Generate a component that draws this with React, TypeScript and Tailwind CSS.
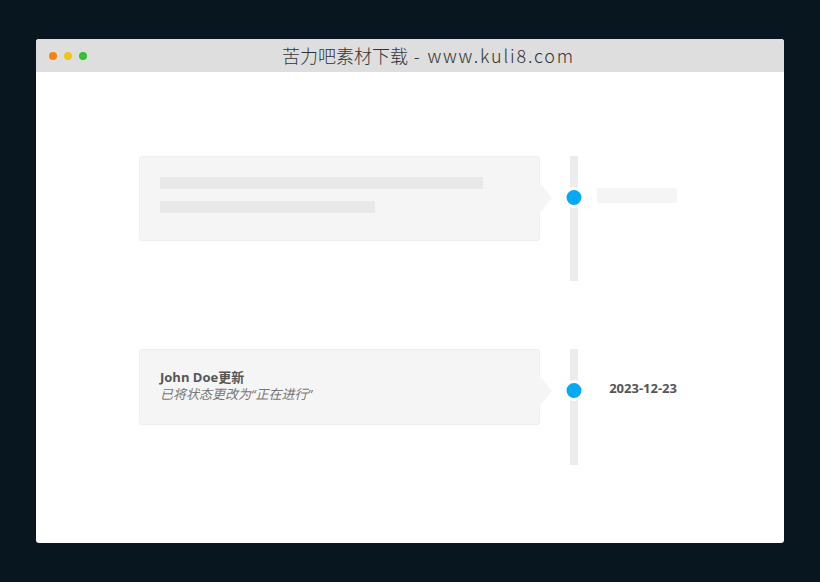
import React from 'react';

const font = { fontFamily: '"Open Sans", "Noto Sans CJK SC", sans-serif' };

function Arrow() {
  return (
    <div className="absolute left-full top-[25px] w-0 h-0 border-y-[16px] border-y-transparent border-l-[13px] border-l-[#f5f5f5]" />
  );
}

function Rail() {
  return (
    <div className="relative w-[8px] ml-[30px] bg-[#ececee]">
      <div className="absolute left-1/2 -translate-x-1/2 top-[31px] w-[21px] h-[21px] rounded-full bg-[#03a9f4] border-[3px] border-white" />
    </div>
  );
}

function LoadingItem() {
  return (
    <div className="flex">
      <div className="pb-[40px]">
        <div className="relative w-[401px] rounded-[3px] border border-[#eeeeee] bg-[#f5f5f5] px-[20px] pt-[20px] pb-[27px]">
          <div className="h-[12px] w-[90%] bg-[#e8e8e8]" />
          <div className="mt-[12px] h-[12px] w-[60%] bg-[#e8e8e8]" />
          <Arrow />
        </div>
      </div>
      <Rail />
      <div className="ml-[19px] w-[80px] pt-[32px]">
        <div className="h-[15px] bg-[#f5f5f5]" />
      </div>
    </div>
  );
}

function EventItem() {
  return (
    <div className="flex">
      <div className="pb-[40px]">
        <div className="relative w-[401px] rounded-[3px] border border-[#eeeeee] bg-[#f5f5f5] px-[20px] pt-[19px] pb-[21px] text-[13px] leading-[17px]">
          <div className="font-bold text-[#555555]">John Doe更新</div>
          <div className="italic text-[#777777]">已将状态更改为“正在进行”</div>
          <Arrow />
        </div>
      </div>
      <Rail />
      <div className="ml-[19px] w-[80px] pt-[30px] text-right text-[13px] leading-[18px] font-bold text-[#555555]">
        2023-12-23
      </div>
    </div>
  );
}

export default function App() {
  return (
    <div className="min-h-[582px] bg-[#07161f] px-[36px] pt-[39px]" style={font}>
      <div className="h-[504px] w-[748px] overflow-hidden rounded-[3px] bg-white flex flex-col">
        <div className="h-[33px] bg-[#dedede] flex items-center">
          <div className="ml-[13px] flex gap-[7px]">
            <span className="w-[8px] h-[8px] rounded-full bg-[#f7820c]" />
            <span className="w-[8px] h-[8px] rounded-full bg-[#efc419]" />
            <span className="w-[8px] h-[8px] rounded-full bg-[#31c131]" />
          </div>
          <div
            className="flex-1 pr-[14px] text-center text-[18px] leading-[33px] text-[#333333] font-light"
            style={{ fontFamily: '"Noto Sans CJK SC", sans-serif' }}
          >
            苦力吧素材下载<span className="tracking-[1.8px]"> - www.kuli8.com</span>
          </div>
        </div>
        <div className="pl-[103px] pt-[84px] flex flex-col gap-[68px]">
          <LoadingItem />
          <EventItem />
        </div>
      </div>
    </div>
  );
}
